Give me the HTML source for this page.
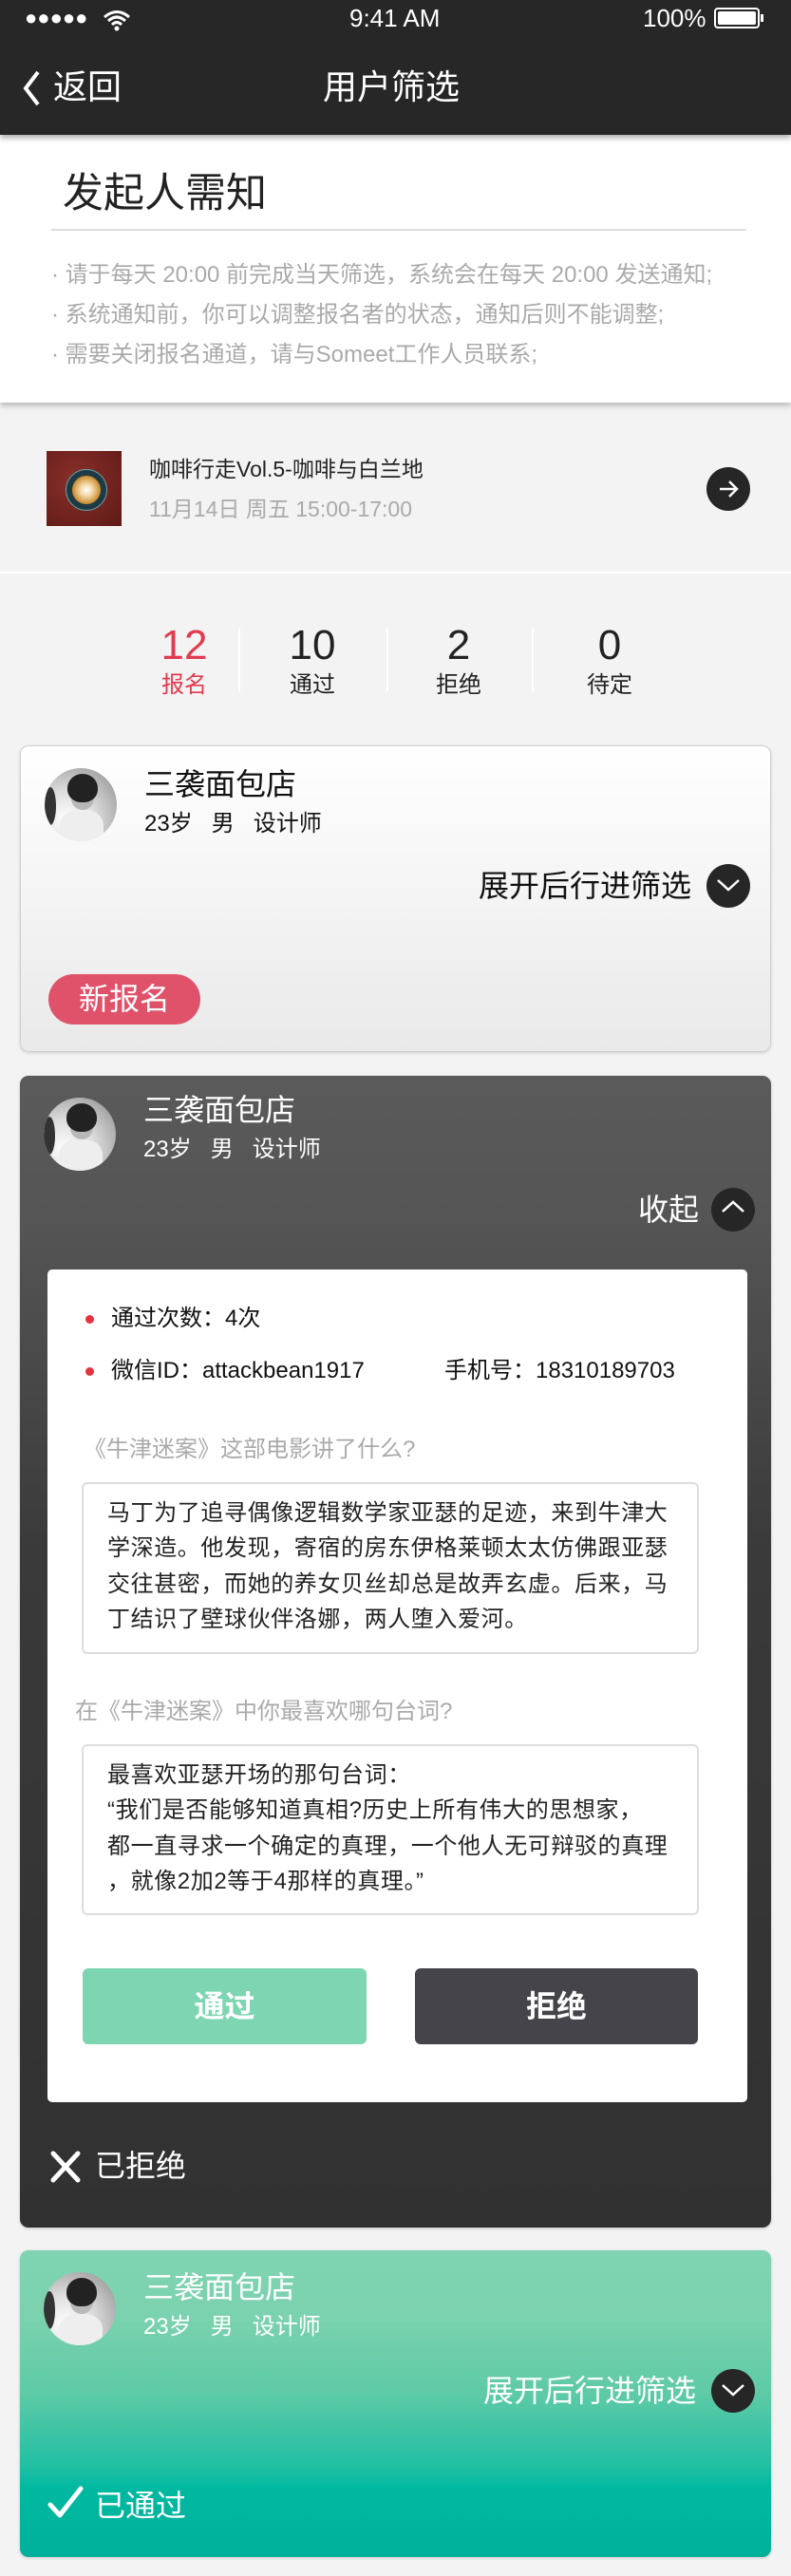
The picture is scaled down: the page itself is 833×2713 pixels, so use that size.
<!DOCTYPE html>
<html><head><meta charset="utf-8"><style>
*{margin:0;padding:0;box-sizing:border-box}
body{width:833px;height:2713px;background:#f4f3f4;position:relative;overflow:hidden;font-family:"Liberation Sans","Noto Sans CJK SC",sans-serif;color:#222}
.a{position:absolute;white-space:nowrap}
.hdr{position:absolute;left:0;top:0;width:833px;height:142px;background:#272727;box-shadow:0 3px 6px rgba(0,0,0,.35);z-index:2}
.notice{position:absolute;left:0;top:142px;width:833px;height:282px;background:#fff;box-shadow:0 3px 6px rgba(0,0,0,.25);z-index:1}
.bl{color:#aaa;font-size:24px;left:54px}
.card{position:absolute;left:21px;width:791px;border-radius:9px}
.av{position:absolute;width:76px;height:77px;border-radius:50%;overflow:hidden;background:radial-gradient(circle at 30% 70%,#fff 0,#ddd 40%,#888 100%)}
.av .h{position:absolute;left:24px;top:6px;width:32px;height:30px;border-radius:50% 50% 45% 45%;background:#222}
.av .f{position:absolute;left:28px;top:20px;width:24px;height:24px;border-radius:50%;background:#b8b8b8}
.av .b{position:absolute;left:16px;top:44px;width:46px;height:40px;border-radius:40% 40% 0 0;background:#eee}
.av .s{position:absolute;left:0;top:20px;width:12px;height:40px;border-radius:50%;background:#333}
.circ{position:absolute;width:46px;height:46px;border-radius:50%;background:#262626}
.box{position:absolute;left:36px;width:650px;border:2px solid #ddd;border-radius:6px;padding:12px 0 0 25px;font-size:24px;line-height:37.3px;color:#222;letter-spacing:.6px}
</style></head><body>
<div class="hdr">
 <div class="a" style="left:26px;top:6px;font-size:22px;color:#fff;letter-spacing:0">●●●●●</div>
 <svg class="a" style="left:108px;top:9px" width="30" height="24" viewBox="0 0 30 24"><path d="M2 9 Q15 -2 28 9 M6 13 Q15 5 24 13 M10 17 Q15 12 20 17" stroke="#fff" stroke-width="3" fill="none"/><circle cx="15" cy="21" r="2.5" fill="#fff"/></svg>
 <div class="a" style="left:368px;top:4px;font-size:26px;color:#fff">9:41 AM</div>
 <div class="a" style="left:677px;top:4px;font-size:26px;color:#fff">100%</div>
 <div class="a" style="left:752px;top:8px;width:48px;height:22px;border:2px solid #fff;border-radius:4px;padding:2px"><div style="width:100%;height:100%;background:#fff;border-radius:2px"></div></div>
 <div class="a" style="left:801px;top:15px;width:3px;height:8px;background:#fff"></div>
 <svg class="a" style="left:22px;top:74px" width="22" height="38" viewBox="0 0 22 38"><path d="M18 2 L5 19 L18 36" stroke="#fff" stroke-width="4" fill="none"/></svg>
 <div class="a" style="left:56px;top:69px;font-size:36px;color:#fff;line-height:46px">返回</div>
 <div class="a" style="left:340px;top:69px;font-size:36px;color:#fff;line-height:46px">用户筛选</div>
</div>
<div class="notice">
 <div class="a" style="left:66px;top:36px;font-size:43px;line-height:52px;color:#222">发起人需知</div>
 <div class="a" style="left:54px;top:99px;width:732px;height:2px;background:#ddd"></div>
 <div class="a bl" style="top:127px">· 请于每天 20:00 前完成当天筛选，系统会在每天 20:00 发送通知;</div>
 <div class="a bl" style="top:169px">· 系统通知前，你可以调整报名者的状态，通知后则不能调整;</div>
 <div class="a bl" style="top:211px">· 需要关闭报名通道，请与Someet工作人员联系;</div>
</div>
<div class="a" style="left:49px;top:475px;width:79px;height:79px;background:radial-gradient(circle at 40% 40%,#8a2f2a,#5e1a17)">
 <div style="position:absolute;left:20px;top:19px;width:44px;height:44px;border-radius:50%;background:#1f3a44;border:1px solid #6aa"></div>
 <div style="position:absolute;left:27px;top:26px;width:30px;height:30px;border-radius:50%;background:radial-gradient(circle,#fff 0,#f3d9a8 30%,#c88a2e 70%)"></div>
</div>
<div class="a" style="left:157px;top:479px;font-size:23px;line-height:30px;color:#222">咖啡行走Vol.5-咖啡与白兰地</div>
<div class="a" style="left:157px;top:521px;font-size:23px;line-height:30px;color:#aaa">11月14日 周五 15:00-17:00</div>
<div class="circ" style="left:744px;top:492px"></div>
<svg class="a" style="left:752px;top:500px" width="30" height="30" viewBox="0 0 30 30"><path d="M6 15 H24 M16 7 L24 15 L16 23" stroke="#fff" stroke-width="2.5" fill="none"/></svg>
<div class="a" style="left:0;top:602px;width:833px;height:2px;background:#fff"></div>
<div class="a" style="left:169px;top:655px;width:50px;text-align:center;font-size:44px;line-height:50px;color:#e23a4e">12</div>
<div class="a" style="left:164px;top:707px;width:60px;text-align:center;font-size:24px;line-height:30px;color:#e23a4e">报名</div>
<div class="a" style="left:304px;top:655px;width:50px;text-align:center;font-size:44px;line-height:50px">10</div>
<div class="a" style="left:299px;top:707px;width:60px;text-align:center;font-size:24px;line-height:30px">通过</div>
<div class="a" style="left:458px;top:655px;width:50px;text-align:center;font-size:44px;line-height:50px">2</div>
<div class="a" style="left:453px;top:707px;width:60px;text-align:center;font-size:24px;line-height:30px">拒绝</div>
<div class="a" style="left:617px;top:655px;width:50px;text-align:center;font-size:44px;line-height:50px">0</div>
<div class="a" style="left:612px;top:707px;width:60px;text-align:center;font-size:24px;line-height:30px">待定</div>
<div class="a" style="left:251px;top:662px;width:2px;height:66px;background:#fff"></div>
<div class="a" style="left:407px;top:662px;width:2px;height:66px;background:#fff"></div>
<div class="a" style="left:560px;top:662px;width:2px;height:66px;background:#fff"></div>
<div class="card" style="top:785px;height:323px;background:linear-gradient(#fff,#e9e9e9);border:1.5px solid #d0d0d0;box-shadow:0 1px 3px rgba(0,0,0,.15)">
 <div class="av" style="left:25px;top:23px"><div class="s"></div><div class="b"></div><div class="f"></div><div class="h"></div></div>
 <div class="a" style="left:130px;top:20px;font-size:32px;line-height:40px;color:#111">三袭面包店</div>
 <div class="a" style="left:130px;top:67px;font-size:24px;line-height:30px;color:#111">23岁&nbsp;&nbsp;&nbsp;男&nbsp;&nbsp;&nbsp;设计师</div>
 <div class="a" style="right:83px;top:127px;font-size:32px;line-height:40px;color:#111">展开后行进筛选</div>
 <div class="circ" style="left:722px;top:124px"></div>
 <svg class="a" style="left:731px;top:135px" width="28" height="22" viewBox="0 0 28 22"><path d="M3 6 L14 16 L25 6" stroke="#fff" stroke-width="2.5" fill="none"/></svg>
 <div class="a" style="left:29px;top:240px;width:160px;height:53px;border-radius:27px;background:#e0526a;color:#fff;font-size:32px;line-height:53px;text-align:center">新报名</div>
</div>
<div class="card" style="top:1133px;height:1213px;background:linear-gradient(#5a5a5a 0,#555 150px,#3a3a3a 500px,#333 1000px,#313131);box-shadow:0 1px 3px rgba(0,0,0,.2)">
 <div class="av" style="left:25px;top:23px"><div class="s"></div><div class="b"></div><div class="f"></div><div class="h"></div></div>
 <div class="a" style="left:130px;top:16px;font-size:32px;line-height:40px;color:#fff">三袭面包店</div>
 <div class="a" style="left:130px;top:63px;font-size:24px;line-height:30px;color:#fff">23岁&nbsp;&nbsp;&nbsp;男&nbsp;&nbsp;&nbsp;设计师</div>
 <div class="a" style="right:76px;top:121px;font-size:32px;line-height:40px;color:#fff">收起</div>
 <div class="circ" style="left:728px;top:118px"></div>
 <svg class="a" style="left:737px;top:128px" width="28" height="22" viewBox="0 0 28 22"><path d="M3 15 L14 5 L25 15" stroke="#fff" stroke-width="2.5" fill="none"/></svg>
 <div class="a" style="left:29px;top:204px;width:737px;height:877px;background:#fff;border-radius:5px">
  <div class="a" style="left:40px;top:48px;width:9px;height:9px;border-radius:50%;background:#e8313f"></div>
  <div class="a" style="left:67px;top:37px;font-size:24px;line-height:30px;color:#111">通过次数：4次</div>
  <div class="a" style="left:40px;top:103px;width:9px;height:9px;border-radius:50%;background:#e8313f"></div>
  <div class="a" style="left:67px;top:92px;font-size:24px;line-height:30px;color:#111">微信ID：attackbean1917</div>
  <div class="a" style="left:418px;top:92px;font-size:24px;line-height:30px;color:#111">手机号：18310189703</div>
  <div class="a" style="left:38px;top:175px;font-size:24px;line-height:30px;color:#aaa">《牛津迷案》这部电影讲了什么?</div>
  <div class="box" style="top:224px;height:181px">马丁为了追寻偶像逻辑数学家亚瑟的足迹，来到牛津大<br>学深造。他发现，寄宿的房东伊格莱顿太太仿佛跟亚瑟<br>交往甚密，而她的养女贝丝却总是故弄玄虚。后来，马<br>丁结识了壁球伙伴洛娜，两人堕入爱河。</div>
  <div class="a" style="left:29px;top:451px;font-size:24px;line-height:30px;color:#aaa">在《牛津迷案》中你最喜欢哪句台词?</div>
  <div class="box" style="top:500px;height:180px">最喜欢亚瑟开场的那句台词：<br>“我们是否能够知道真相?历史上所有伟大的思想家，<br>都一直寻求一个确定的真理，一个他人无可辩驳的真理<br>，就像2加2等于4那样的真理。”</div>
  <div class="a" style="left:37px;top:736px;width:299px;height:80px;border-radius:6px;background:#7dd5b1;color:#fff;font-size:32px;font-weight:bold;line-height:80px;text-align:center">通过</div>
  <div class="a" style="left:387px;top:736px;width:298px;height:80px;border-radius:6px;background:#45444b;color:#fff;font-size:32px;font-weight:bold;line-height:80px;text-align:center">拒绝</div>
 </div>
 <svg class="a" style="left:31px;top:1132px" width="34" height="34" viewBox="0 0 34 34"><path d="M4 3 L30 31 M30 3 L4 31" stroke="#fff" stroke-width="5" stroke-linecap="round"/></svg>
 <div class="a" style="left:79px;top:1128px;font-size:32px;line-height:40px;color:#fff">已拒绝</div>
</div>
<div class="card" style="top:2370px;height:323px;background:linear-gradient(#7fd4b1 0,#7bd2ae 70px,#5ecaa6 150px,#1fbfa3 230px,#00b9a0 250px,#00b09a 323px);box-shadow:0 1px 3px rgba(0,0,0,.2)">
 <div class="av" style="left:25px;top:23px"><div class="s"></div><div class="b"></div><div class="f"></div><div class="h"></div></div>
 <div class="a" style="left:130px;top:19px;font-size:32px;line-height:40px;color:#fff">三袭面包店</div>
 <div class="a" style="left:130px;top:66px;font-size:24px;line-height:30px;color:#fff">23岁&nbsp;&nbsp;&nbsp;男&nbsp;&nbsp;&nbsp;设计师</div>
 <div class="a" style="right:79px;top:128px;font-size:32px;line-height:40px;color:#fff">展开后行进筛选</div>
 <div class="circ" style="left:728px;top:125px"></div>
 <svg class="a" style="left:737px;top:136px" width="28" height="22" viewBox="0 0 28 22"><path d="M3 6 L14 16 L25 6" stroke="#fff" stroke-width="2.5" fill="none"/></svg>
 <svg class="a" style="left:28px;top:248px" width="40" height="36" viewBox="0 0 40 36"><path d="M4 20 L14 31 L36 3" stroke="#fff" stroke-width="5" fill="none" stroke-linecap="round" stroke-linejoin="round"/></svg>
 <div class="a" style="left:79px;top:249px;font-size:32px;line-height:40px;color:#fff">已通过</div>
</div>
</body></html>
